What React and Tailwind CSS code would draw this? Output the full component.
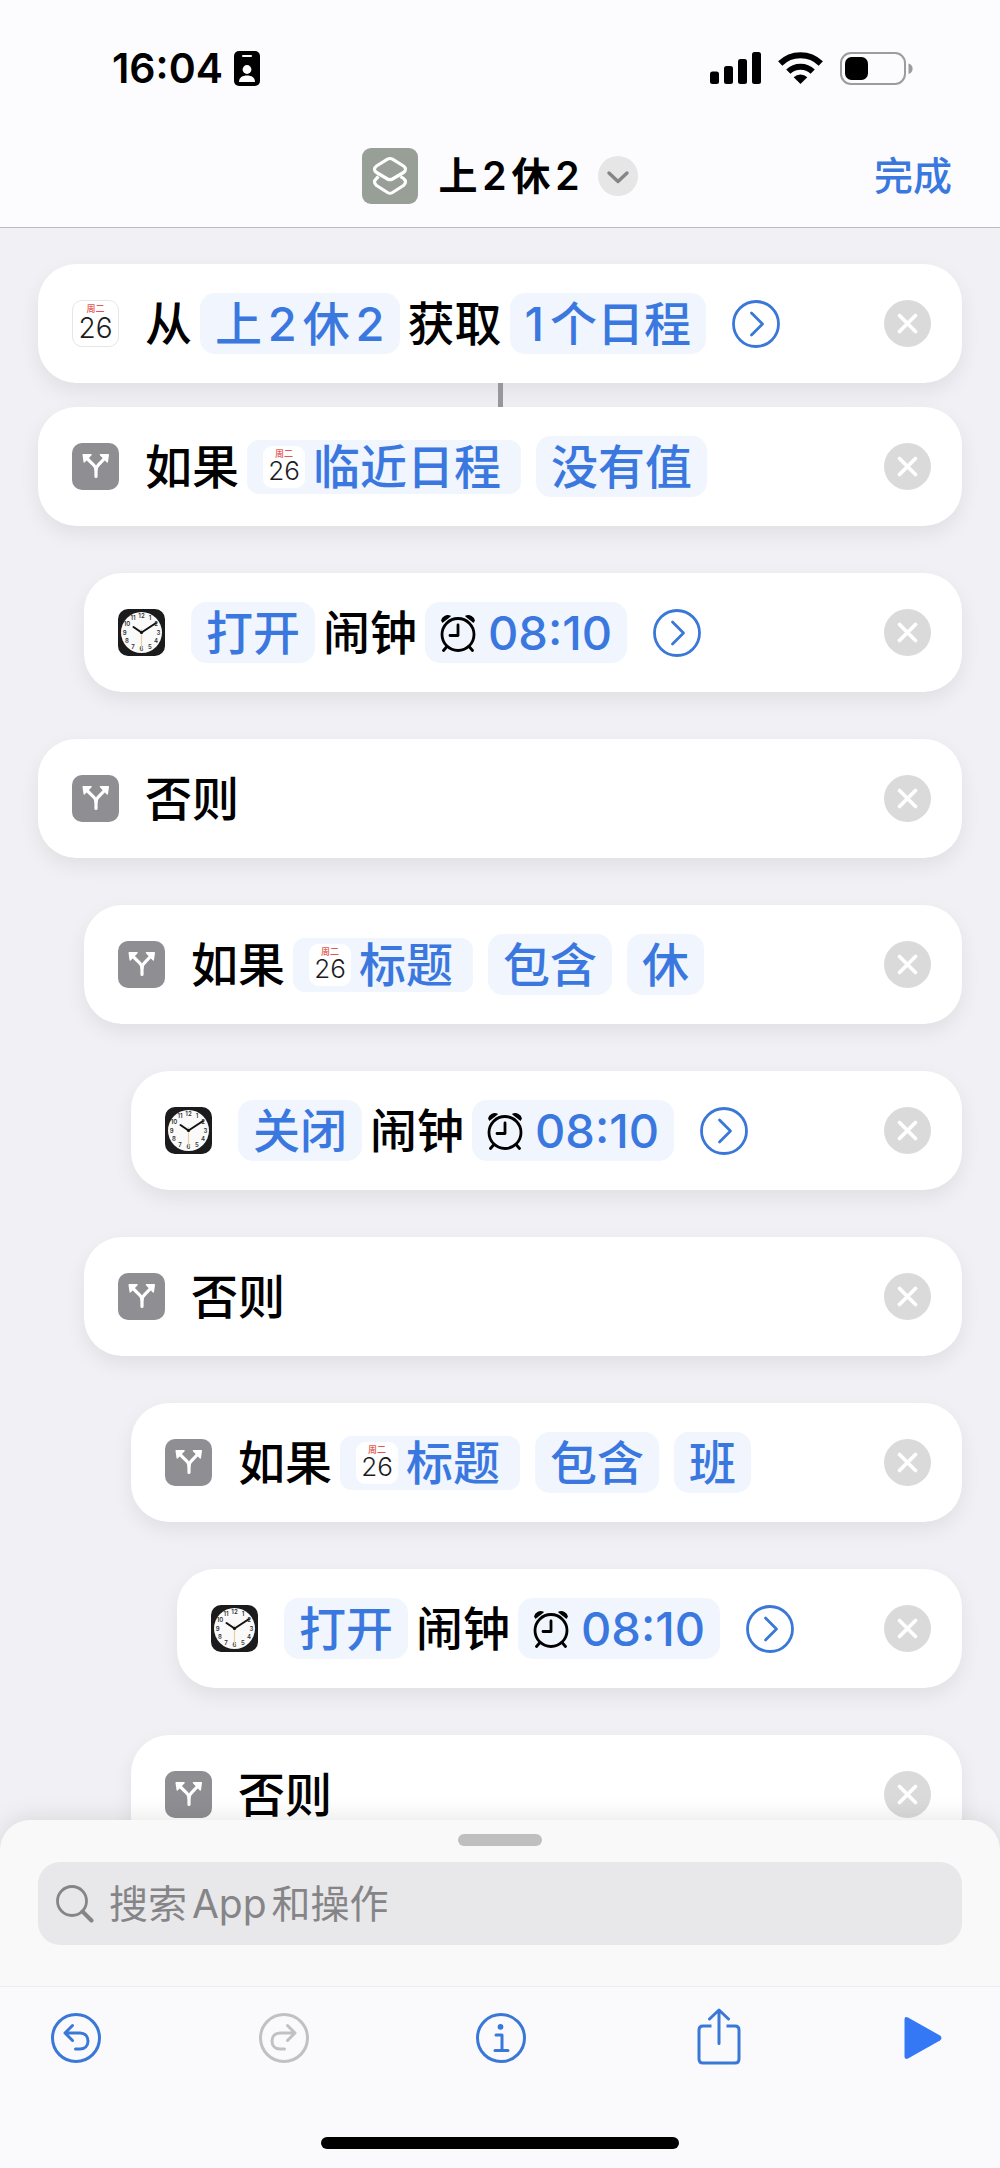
import React from "react";
import clsx from "clsx";

const INDENTS = ["ml-0", "ml-[46px]", "ml-[93px]", "ml-[139px]"];

const STEPS = [
  {
    level: 0,
    icon: "calendar",
    parts: [
      { text: "从" },
      { pill: "上2休2" },
      { text: "获取" },
      { pill: "1个日程" },
    ],
    more: true,
    linked: true,
  },
  {
    level: 0,
    icon: "branch",
    parts: [
      { text: "如果" },
      { pill: "临近日程", icon: "calendar" },
      { pill: "没有值" },
    ],
  },
  { level: 1, icon: "clock", parts: alarmParts("打开"), more: true },
  { level: 0, icon: "branch", parts: [{ text: "否则" }] },
  { level: 1, icon: "branch", parts: titleParts("休") },
  { level: 2, icon: "clock", parts: alarmParts("关闭"), more: true },
  { level: 1, icon: "branch", parts: [{ text: "否则" }] },
  { level: 2, icon: "branch", parts: titleParts("班") },
  { level: 3, icon: "clock", parts: alarmParts("打开"), more: true },
  { level: 2, icon: "branch", parts: [{ text: "否则" }] },
];

function alarmParts(action) {
  return [
    { pill: action },
    { text: "闹钟" },
    { pill: "08:10", icon: "alarm" },
  ];
}

function titleParts(value) {
  return [
    { text: "如果" },
    { pill: "标题", icon: "calendar" },
    { pill: "包含" },
    { pill: value },
  ];
}

function CalendarIcon({ small }) {
  return (
    <span
      className={clsx(
        "flex shrink-0 flex-col items-center justify-center bg-white",
        small
          ? "size-[42px] rounded-[9px]"
          : "size-[47px] rounded-[10px] border border-[#e6e6e8]",
      )}
    >
      <span className="text-[9px] leading-[9px] font-medium text-[#e2574f]">
        周二
      </span>
      <span
        className={clsx(
          "font-light text-[#1c1c1e]",
          small ? "text-[26px] leading-[26px]" : "text-[28px] leading-[30px]",
        )}
      >
        26
      </span>
    </span>
  );
}

function BranchIcon() {
  return (
    <svg viewBox="0 0 47 47" className="size-[47px] shrink-0">
      <rect width="47" height="47" rx="10" fill="#8e8e93" />
      <g fill="none" stroke="#fff" strokeWidth="3.2" strokeLinecap="round">
        <path d="M24 33.500V27C24 25 23.200 23.600 21.800 22.200L14.500 15" />
        <path d="M24 27C24 25 24.800 23.600 26.200 22.200L33 15" />
      </g>
      <path
        d="M11.300 11.800H19L12.300 18.800ZM36.200 11.800H28.500L35.200 18.800Z"
        fill="#fff"
        stroke="#fff"
        strokeWidth="1.6"
        strokeLinejoin="round"
      />
    </svg>
  );
}

function ClockIcon() {
  const numbers = [12, 1, 2, 3, 4, 5, 6, 7, 8, 9, 10, 11];
  return (
    <svg viewBox="0 0 47 47" className="size-[47px] shrink-0">
      <rect width="47" height="47" rx="10" fill="#1b1b1d" />
      <circle cx="23.500" cy="23.500" r="20.500" fill="#fafafa" />
      {numbers.map((n, i) => {
        const angle = (i * Math.PI) / 6;
        return (
          <text
            key={n}
            x={23.5 + Math.sin(angle) * 16.8}
            y={25.6 - Math.cos(angle) * 16.8}
            fontSize="6"
            fontWeight="600"
            textAnchor="middle"
            fill="#333"
          >
            {n}
          </text>
        );
      })}
      <path d="M23.500 20V40" stroke="#e9cfa0" strokeWidth="1.2" />
      <path
        d="M23.500 23.500L15.500 18M23.500 23.500L38 14"
        stroke="#111"
        strokeWidth="2"
        strokeLinecap="round"
      />
      <circle cx="23.500" cy="23.500" r="1.600" fill="#111" />
    </svg>
  );
}

function AlarmIcon() {
  return (
    <svg
      viewBox="0 0 36 38"
      className="h-[38px] w-9 shrink-0"
      fill="none"
      stroke="#000"
      strokeWidth="2.800"
      strokeLinecap="round"
    >
      <circle cx="18" cy="20.500" r="16" />
      <path d="M18 11V21.500H10" strokeLinejoin="round" />
      <path d="M6.500 33L3.500 36.500M29.500 33L32.500 36.500" />
      <path
        d="M1.800 6.500C2.500 3 6.500 0.800 10 2.200L2.600 8ZM34.200 6.500C33.500 3 29.500 0.800 26 2.200L33.400 8Z"
        fill="#000"
        strokeWidth="1.400"
        strokeLinejoin="round"
      />
    </svg>
  );
}

function PartIcon({ name, small }) {
  if (name === "calendar") return <CalendarIcon small={small} />;
  if (name === "branch") return <BranchIcon />;
  if (name === "clock") return <ClockIcon />;
  return <AlarmIcon />;
}

function Part({ part, afterPill }) {
  if (part.text) {
    return <span className="ml-2 first:ml-0">{part.text}</span>;
  }
  return (
    <button
      type="button"
      className={clsx(
        "flex items-center bg-[#f0f5fe] text-[#3a78df] first:ml-0",
        afterPill ? "ml-[15px]" : "ml-2",
        part.icon === "calendar"
          ? "h-[54px] gap-2 rounded-xl pr-5 pl-4"
          : "h-[61px] gap-3 rounded-[15px] px-[15px]",
      )}
    >
      {part.icon && <PartIcon name={part.icon} small />}
      {part.pill}
    </button>
  );
}

function Step({ step }) {
  return (
    <li className={INDENTS[step.level]}>
      <div className="flex h-[119px] items-center rounded-[38px] bg-white pr-[31px] pl-[34px] shadow-[0_8px_20px_rgba(0,0,0,0.07)]">
        <PartIcon name={step.icon} />
        <div className="ml-[26px] flex items-center text-[47px] leading-[60px] font-medium">
          {step.parts.map((part, i) => (
            <Part
              key={i}
              part={part}
              afterPill={i > 0 && Boolean(step.parts[i - 1].pill)}
            />
          ))}
        </div>
        {step.more && (
          <button type="button" aria-label="展开" className="ml-[26px]">
            <svg
              viewBox="0 0 48 48"
              className="size-12"
              fill="none"
              stroke="#3a78d8"
              strokeWidth="2.800"
              strokeLinecap="round"
              strokeLinejoin="round"
            >
              <circle cx="24" cy="24" r="22.500" />
              <path d="M19.500 13L30.500 24L19.500 35" />
            </svg>
          </button>
        )}
        <button type="button" aria-label="删除" className="ml-auto">
          <svg viewBox="0 0 47 47" className="size-[47px]">
            <circle cx="23.500" cy="23.500" r="23.500" fill="#dadadb" />
            <path
              d="M15.500 15.500L31.500 31.500M31.500 15.500L15.500 31.500"
              stroke="#fff"
              strokeWidth="3.800"
              strokeLinecap="round"
            />
          </svg>
        </button>
      </div>
      {step.linked ? (
        <div className="mx-auto h-6 w-[5px] bg-[#98989c]" />
      ) : (
        <div className="h-[47px]" />
      )}
    </li>
  );
}

function StatusBar() {
  return (
    <div className="flex h-[136px] items-center pr-[87px] pl-[112px]">
      <span className="text-[41px] leading-[48px] font-semibold">16:04</span>
      <svg viewBox="0 0 26 35" className="ml-[11px] h-[35px] w-[26px]">
        <rect width="26" height="35" rx="5" fill="#000" />
        <rect x="8" y="4" width="10" height="2" rx="1" fill="#fff" />
        <circle cx="13" cy="18.500" r="4.400" fill="#fff" />
        <path d="M5 31C5 26.500 8.500 24.500 13 24.500S21 26.500 21 31Z" fill="#fff" />
      </svg>
      <svg viewBox="0 0 51 32" className="ml-auto h-8 w-[51px]">
        <rect x="0" y="19.500" width="9" height="12.500" rx="2.500" />
        <rect x="14" y="14" width="9" height="18" rx="2.500" />
        <rect x="28" y="7" width="9" height="25" rx="2.500" />
        <rect x="42" y="0" width="9" height="32" rx="2.500" />
      </svg>
      <svg
        viewBox="0 0 45 32"
        className="ml-[17px] h-8 w-[45px]"
        fill="none"
        stroke="#000"
        strokeWidth="6"
      >
        <path d="M2.200 11.500A29 29 0 0 1 42.800 11.500" />
        <path d="M10.300 19.700A17.500 17.500 0 0 1 34.700 19.700" />
        <path
          d="M15.700 25.300A9.600 9.600 0 0 1 29.300 25.300L22.500 32Z"
          fill="#000"
          stroke="none"
        />
      </svg>
      <svg viewBox="0 0 73 33" className="ml-[17px] h-[33px] w-[73px]">
        <rect
          x="1"
          y="1"
          width="64"
          height="31"
          rx="10"
          fill="none"
          stroke="#9c9c9e"
          strokeWidth="2"
        />
        <rect x="5" y="5" width="23" height="23" rx="6.500" />
        <path d="M68.500 11.500C74 13 74 20.500 68.500 22Z" fill="#9c9c9e" />
      </svg>
    </div>
  );
}

function Header() {
  return (
    <header className="shrink-0 border-b border-[#bcbbc0] bg-[#fcfcfe]">
      <StatusBar />
      <div className="grid h-[91px] grid-cols-[1fr_auto_1fr] items-start px-12 pt-3">
        <h1 className="col-start-2 flex h-14 items-center text-[39px] leading-[56px] font-semibold">
          <svg viewBox="0 0 56 56" className="size-14">
            <rect width="56" height="56" rx="9" fill="#979f96" />
            <g
              fill="none"
              stroke="#fff"
              strokeWidth="3.200"
              strokeLinejoin="round"
            >
              <path d="M25.500 11.200Q28 9.800 30.500 11.200L41.500 18Q45.500 21 41.500 24.500L30.500 31Q28 32.300 25.500 31L14.500 24.500Q10.500 21 14.500 18Z" />
              <path d="M16.500 28.500L14.500 30.500Q10.500 34 14.500 37.500L25.500 44.500Q28 46 30.500 44.500L41.500 37.500Q45.500 34 41.500 30.500L38.500 28.500" />
            </g>
          </svg>
          <span className="ml-5">上2休2</span>
          <button
            type="button"
            aria-label="更多选项"
            className="ml-[18px] size-10 rounded-full bg-[#e6e6e7]"
          >
            <svg viewBox="0 0 40 40" className="size-10">
              <path
                d="M11 17L20 25.500L29 17"
                fill="none"
                stroke="#858587"
                strokeWidth="3.400"
                strokeLinecap="round"
                strokeLinejoin="round"
              />
            </svg>
          </button>
        </h1>
        <button
          type="button"
          className="justify-self-end text-[39px] leading-[56px] font-medium text-[#3a78df]"
        >
          完成
        </button>
      </div>
    </header>
  );
}

function SearchSheet() {
  return (
    <section className="relative -mt-9 shrink-0 rounded-t-[30px] bg-[#f9f9f9] px-[38px] pt-[14px] pb-[41px] shadow-[0_-2px_24px_rgba(0,0,0,0.1)]">
      <div className="mx-auto h-3 w-[84px] rounded-full bg-[#bfbfc0]" />
      <label className="mt-4 flex h-[83px] items-center rounded-[22px] bg-[#e8e8ea] px-[18px]">
        <svg
          viewBox="0 0 38 38"
          className="size-[38px] shrink-0"
          fill="none"
          stroke="#858588"
        >
          <circle cx="16" cy="16" r="14.500" strokeWidth="2.800" />
          <path d="M26.500 26.500L35.500 35.500" strokeWidth="4" strokeLinecap="round" />
        </svg>
        <input
          type="text"
          aria-label="搜索"
          placeholder="搜索App和操作"
          className="ml-[15px] min-w-0 flex-1 bg-transparent text-[39px] leading-[56px] outline-none placeholder:text-[#858588]"
        />
      </label>
    </section>
  );
}

function Toolbar() {
  return (
    <nav className="relative h-[182px] shrink-0 border-t border-[#ececee] bg-[#fafafc]">
      <div className="grid h-[102px] grid-cols-[175px_1fr_1fr_1fr_172px] items-center justify-items-center text-[#3a78d8]">
        <button type="button" aria-label="撤销" className="ml-[51px] justify-self-start">
          <UndoIcon />
        </button>
        <button type="button" aria-label="重做" disabled className="text-[#c1c1c2]">
          <UndoIcon flipped />
        </button>
        <button type="button" aria-label="信息">
          <svg viewBox="0 0 50 50" className="size-[50px]" fill="none" stroke="currentColor" strokeWidth="3">
            <circle cx="25" cy="25" r="23.500" />
            <circle cx="24.500" cy="13.800" r="2.900" fill="currentColor" stroke="none" />
            <path
              d="M20 22H26V37.500M19 37.500H32"
              strokeLinecap="round"
              strokeLinejoin="round"
            />
          </svg>
        </button>
        <button type="button" aria-label="共享">
          <svg
            viewBox="0 2 44 60"
            className="h-[60px] w-11"
            fill="none"
            stroke="currentColor"
            strokeWidth="3"
            strokeLinecap="round"
            strokeLinejoin="round"
          >
            <path d="M14.500 20H6Q2 20 2 24V53Q2 57 6 57H38Q42 57 42 53V24Q42 20 38 20H29.500" strokeLinecap="butt" />
            <path d="M22 37.500V4.500M12.500 13L22 4L31.500 13" />
          </svg>
        </button>
        <button type="button" aria-label="运行" className="mr-[58px] justify-self-end">
          <svg viewBox="0 0 38 44" className="h-11 w-[38px] fill-[#3478f6]">
            <path d="M0.500 3.500Q0.500 0 4 1.500L36 19.500Q39 22 36 24.500L4 42.500Q0.500 44 0.500 40.500Z" />
          </svg>
        </button>
      </div>
      <div className="mx-auto mt-12 h-3 w-[358px] rounded-full bg-black" />
    </nav>
  );
}

function UndoIcon({ flipped }) {
  return (
    <svg
      viewBox="0 0 50 50"
      className={clsx("size-[50px]", flipped && "-scale-x-100")}
      fill="none"
      stroke="currentColor"
      strokeWidth="3"
      strokeLinecap="round"
      strokeLinejoin="round"
    >
      <circle cx="25" cy="25" r="23.500" />
      <path d="M21.500 12.500L14 20L21.500 27.500M14 20H29C34.500 20 37 24 37 28C37 33 33.500 36 29 36H24.500" />
    </svg>
  );
}

export default function App() {
  return (
    <div className="flex h-screen flex-col overflow-hidden bg-[#f0f0f5] font-['Inter','Noto_Sans_CJK_SC',sans-serif] text-black [text-autospace:normal]">
      <Header />
      <main className="min-h-0 flex-1 overflow-hidden px-[38px] pt-9">
        <ul>
          {STEPS.map((step, i) => (
            <Step key={i} step={step} />
          ))}
        </ul>
      </main>
      <SearchSheet />
      <Toolbar />
    </div>
  );
}
